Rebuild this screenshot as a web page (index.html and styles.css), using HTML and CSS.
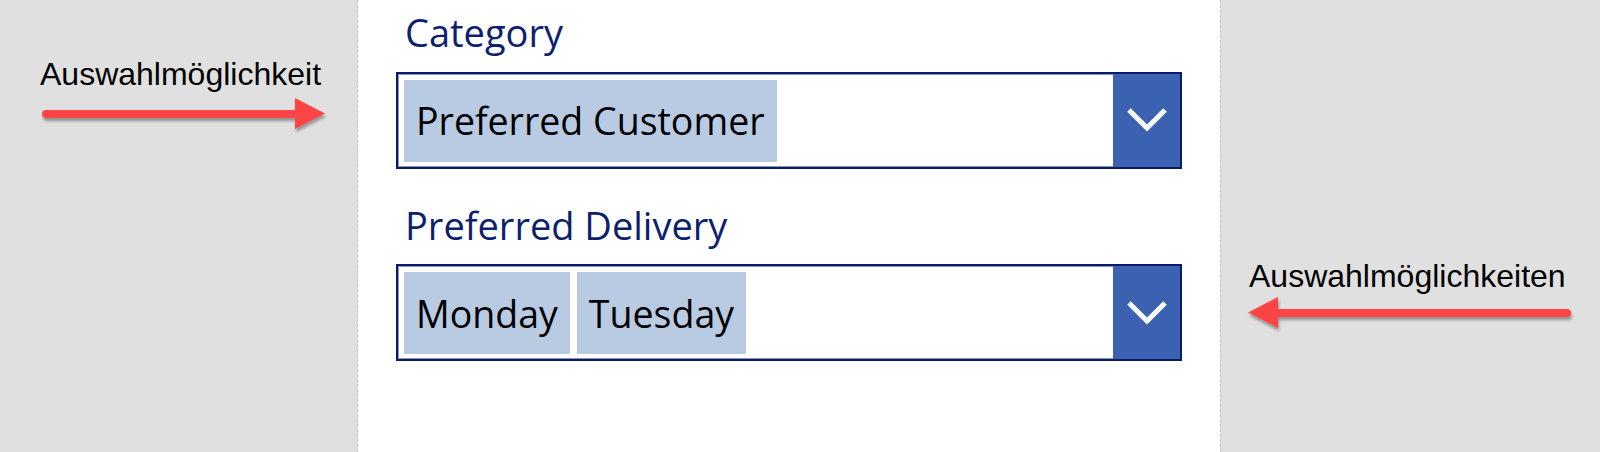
FILE: index.html
```html
<!DOCTYPE html>
<html>
<head>
<meta charset="utf-8">
<link rel="stylesheet" href="styles.css">
</head>
<body>
<div class="page">
  <aside class="note note-left">
    <div class="note-text">Auswahlmöglichkeit</div>
    <svg class="arrow arrow-right" width="300" height="40" viewBox="0 0 300 40">
      <defs>
        <filter id="sh1" x="-10%" y="-50%" width="120%" height="200%">
          <feDropShadow dx="1" dy="3" stdDeviation="1.6" flood-color="#000" flood-opacity="0.35"/>
        </filter>
      </defs>
      <g filter="url(#sh1)">
        <line x1="8" y1="20" x2="262" y2="20" stroke="#fd4545" stroke-width="8" stroke-linecap="round"/>
        <polygon points="257,4 287,19.5 257,35" fill="#fd4545"/>
      </g>
    </svg>
  </aside>
  <main class="form">
    <section class="field">
      <div class="label">Category</div>
      <div class="combo">
        <div class="tags">
          <span class="tag">Preferred Customer</span>
        </div>
        <div class="combo-btn">
          <svg width="42" height="26" viewBox="0 0 42 26"><polyline points="3,3 21,21 39,3" fill="none" stroke="#fff" stroke-width="5"/></svg>
        </div>
      </div>
    </section>
    <section class="field">
      <div class="label">Preferred Delivery</div>
      <div class="combo">
        <div class="tags">
          <span class="tag">Monday</span>
          <span class="tag">Tuesday</span>
        </div>
        <div class="combo-btn">
          <svg width="42" height="26" viewBox="0 0 42 26"><polyline points="3,3 21,21 39,3" fill="none" stroke="#fff" stroke-width="5"/></svg>
        </div>
      </div>
    </section>
  </main>
  <aside class="note note-right">
    <div class="note-text">Auswahlmöglichkeiten</div>
    <svg class="arrow arrow-left" width="332" height="40" viewBox="0 0 332 40">
      <defs>
        <filter id="sh2" x="-10%" y="-50%" width="120%" height="200%">
          <feDropShadow dx="1" dy="3" stdDeviation="1.6" flood-color="#000" flood-opacity="0.35"/>
        </filter>
      </defs>
      <g filter="url(#sh2)">
        <line x1="30" y1="20" x2="323" y2="20" stroke="#fd4545" stroke-width="8" stroke-linecap="round"/>
        <polygon points="34,4 4,19.5 34,35" fill="#fd4545"/>
      </g>
    </svg>
  </aside>
</div>
</body>
</html>
```

FILE: styles.css
```css
html, body {
  margin: 0;
  padding: 0;
  background: #e0e0e0;
}
.page {
  display: flex;
  width: 1600px;
  height: 452px;
  overflow: hidden;
}
.note {
  background: #e0e0e0;
  font-family: "Liberation Sans", Arial, sans-serif;
  font-size: 32px;
  line-height: 36px;
  color: #000;
  display: flex;
  flex-direction: column;
  box-sizing: border-box;
}
.note-left {
  width: 358px;
  padding: 56px 0 0 40px;
  border-right: 1px dashed #c4c4c4;
}
.note-left .arrow {
  margin: 2px 0 0 -2px;
}
.note-right {
  flex: 1;
  padding: 258px 0 0 28px;
  border-left: 1px dashed #c4c4c4;
}
.note-right .arrow {
  margin: -1px 0 0 -5px;
}
.arrow {
  display: block;
  overflow: visible;
}
.form {
  width: 862px;
  background: #fff;
  box-sizing: border-box;
  padding: 9px 0 0 38px;
  display: flex;
  flex-direction: column;
  gap: 33px;
  font-family: "Open Sans", "Noto Sans", sans-serif;
}
.field {
  display: flex;
  flex-direction: column;
  gap: 15px;
}
.label {
  font-size: 38px;
  line-height: 1.25;
  color: #0d1f6f;
  padding-left: 9px;
}
.combo {
  width: 786px;
  height: 97px;
  box-sizing: border-box;
  border: 2px solid #0a1a6b;
  outline: 1px solid #8a93b8;
  outline-offset: -3px;
  display: flex;
  background: #fff;
}
.tags {
  flex: 1;
  display: flex;
  gap: 7px;
  padding: 6px;
}
.tag {
  display: flex;
  align-items: center;
  height: 82px;
  padding: 0 12px;
  background: #b9cae3;
  font-size: 37.5px;
  color: #000;
  white-space: nowrap;
}
.combo-btn {
  width: 67px;
  background: #3a62b0;
  display: flex;
  align-items: center;
  justify-content: center;
  position: relative;
  z-index: 1;
}
```
